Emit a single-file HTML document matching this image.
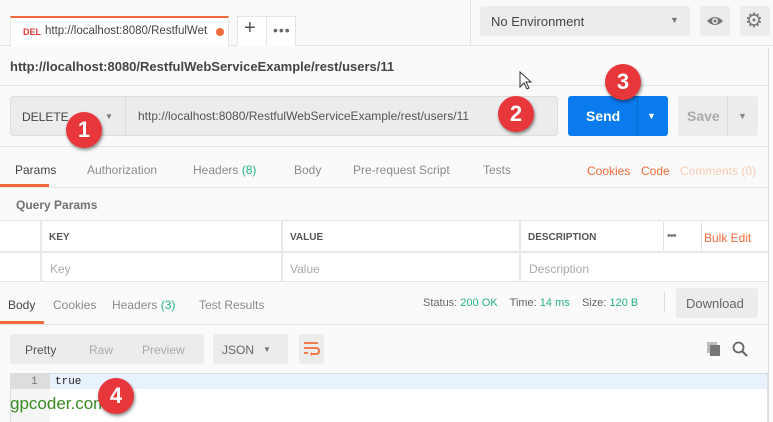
<!DOCTYPE html>
<html><head><meta charset="utf-8"><style>
*{box-sizing:border-box;margin:0;padding:0}
body{width:773px;height:422px;overflow:hidden;background:#fafafa;font-family:"Liberation Sans",sans-serif;font-size:12px;color:#505050;position:relative}
.a{position:absolute}
.btn{background:#ececec;border-radius:3px}
.c{border-radius:50%;width:36px;height:36px;background:#e8373a;color:#fff;font:bold 22px "Liberation Sans",sans-serif;text-align:center;line-height:36px;box-shadow:1px 2px 3px rgba(0,0,0,.45)}
.tab{color:#8a8a8a;font-size:12px}
.hd{font-size:10px;font-weight:bold;color:#555}
.ph{color:#aaa;font-size:12px}
</style></head><body>
<div class="a" style="left:0;top:0;width:773px;height:46px;background:#f9f9f9;border-bottom:1px solid #e2e2e2"></div>
<div class="a" style="left:10px;top:16px;width:219px;height:31px;background:#fff;border-top:2px solid #f26b3a;border-left:1px solid #e5e5e5;border-right:1px solid #e5e5e5"></div>
<div class="a" style="left:23px;top:27px;font-size:9px;font-weight:bold;color:#e53935">DEL</div>
<div class="a" style="left:45px;top:25px;font-size:11.5px;color:#444">http://localhost:8080/RestfulWet</div>
<div class="a" style="left:216px;top:28px;width:8px;height:8px;border-radius:50%;background:#f26b3a"></div>
<div class="a" style="left:237px;top:16px;width:59px;height:30px;background:#fff;border:1px solid #e5e5e5;border-bottom:none"></div>
<div class="a" style="left:266px;top:17px;width:1px;height:29px;background:#e5e5e5"></div>
<div class="a" style="left:244px;top:17px;font-size:20px;color:#555">+</div>
<div class="a" style="left:273px;top:22px;font-size:14px;color:#666;letter-spacing:1px">•••</div>
<div class="a" style="left:470px;top:0;width:1px;height:46px;background:#e2e2e2"></div>
<div class="a btn" style="left:480px;top:6px;width:210px;height:30px"></div>
<div class="a" style="left:491px;top:14px;font-size:13px;color:#444">No Environment</div>
<div class="a" style="left:670px;top:15px;font-size:9px;color:#777">▼</div>
<div class="a btn" style="left:700px;top:6px;width:30px;height:30px"></div>
<svg class="a" style="left:706px;top:13px" width="18" height="16" viewBox="0 0 18 16"><path d="M1 8 Q9 0 17 8 Q9 16 1 8Z" fill="#777"/><circle cx="9" cy="8" r="3" fill="#ececec"/><circle cx="9" cy="8" r="1.5" fill="#777"/></svg>
<div class="a btn" style="left:740px;top:6px;width:30px;height:30px"></div>
<div class="a" style="left:745px;top:8px;font-size:20px;color:#777">⚙</div>
<div class="a" style="left:768px;top:48px;width:1px;height:374px;background:#ddd"></div>
<div class="a" style="left:10px;top:59px;font-size:13px;font-weight:bold;color:#444">http://localhost:8080/RestfulWebServiceExample/rest/users/11</div>
<div class="a" style="left:0;top:85px;width:768px;height:1px;background:#e5e5e5"></div>
<div class="a" style="left:10px;top:96px;width:548px;height:40px;background:#ececec;border:1px solid #ddd;border-radius:3px"></div>
<div class="a" style="left:125px;top:97px;width:1px;height:38px;background:#ddd"></div>
<div class="a" style="left:22px;top:110px;font-size:12px;color:#444">DELETE</div>
<div class="a" style="left:105px;top:112px;font-size:8px;color:#777">▼</div>
<div class="a" style="left:138px;top:109px;font-size:12px;color:#555">http://localhost:8080/RestfulWebServiceExample/rest/users/11</div>
<div class="a" style="left:568px;top:96px;width:100px;height:40px;background:#097bed;border-radius:3px"></div>
<div class="a" style="left:637px;top:96px;width:1px;height:40px;background:#0a6ccf"></div>
<div class="a" style="left:586px;top:108px;font-size:14px;font-weight:bold;color:#fff">Send</div>
<div class="a" style="left:647px;top:111px;font-size:9px;color:#fff">▼</div>
<div class="a btn" style="left:678px;top:96px;width:80px;height:40px"></div>
<div class="a" style="left:727px;top:96px;width:1px;height:40px;background:#ddd"></div>
<div class="a" style="left:687px;top:108px;font-size:14px;font-weight:bold;color:#aaa">Save</div>
<div class="a" style="left:738px;top:111px;font-size:9px;color:#888">▼</div>
<div class="a" style="left:0;top:146px;width:768px;height:1px;background:#e5e5e5"></div>
<div class="a tab" style="left:15px;top:163px;color:#444">Params</div>
<div class="a tab" style="left:87px;top:163px">Authorization</div>
<div class="a tab" style="left:193px;top:163px">Headers <span style="color:#26b47f">(8)</span></div>
<div class="a tab" style="left:294px;top:163px">Body</div>
<div class="a tab" style="left:353px;top:163px">Pre-request Script</div>
<div class="a tab" style="left:483px;top:163px">Tests</div>
<div class="a tab" style="left:587px;top:164px;color:#f26b3a">Cookies</div>
<div class="a tab" style="left:641px;top:164px;color:#f26b3a">Code</div>
<div class="a tab" style="left:680px;top:164px;color:#f9cbb6">Comments (0)</div>
<div class="a" style="left:0;top:184px;width:49px;height:3px;background:#f26b3a"></div>
<div class="a" style="left:0;top:187px;width:768px;height:1px;background:#e5e5e5"></div>
<div class="a" style="left:16px;top:198px;font-size:12px;font-weight:bold;color:#707070">Query Params</div>
<div class="a" style="left:0;top:220px;width:768px;height:62px;background:#fff;border-top:1px solid #e5e5e5;border-bottom:1px solid #e5e5e5"></div>
<div class="a" style="left:0;top:251px;width:768px;height:2px;background:#e8e8e8"></div>
<div class="a" style="left:40px;top:220px;width:2px;height:62px;background:#e8e8e8"></div>
<div class="a" style="left:281px;top:220px;width:2px;height:62px;background:#e8e8e8"></div>
<div class="a" style="left:519px;top:220px;width:2px;height:62px;background:#e8e8e8"></div>
<div class="a" style="left:663px;top:222px;width:1px;height:28px;background:#e0e0e0"></div>
<div class="a" style="left:701px;top:222px;width:1px;height:28px;background:#e0e0e0"></div>
<div class="a hd" style="left:49px;top:232px">KEY</div>
<div class="a hd" style="left:290px;top:232px">VALUE</div>
<div class="a hd" style="left:528px;top:232px">DESCRIPTION</div>
<div class="a" style="left:667px;top:230px;font-size:11px;color:#777;letter-spacing:-1px">•••</div>
<div class="a" style="left:704px;top:231px;color:#f26b3a">Bulk Edit</div>
<div class="a ph" style="left:50px;top:262px">Key</div>
<div class="a ph" style="left:290px;top:262px">Value</div>
<div class="a ph" style="left:529px;top:262px">Description</div>
<div class="a tab" style="left:8px;top:298px;color:#444">Body</div>
<div class="a tab" style="left:53px;top:298px">Cookies</div>
<div class="a tab" style="left:112px;top:298px">Headers <span style="color:#26b47f">(3)</span></div>
<div class="a tab" style="left:199px;top:298px">Test Results</div>
<div class="a" style="left:0;top:321px;width:44px;height:3px;background:#f26b3a"></div>
<div class="a" style="left:0;top:324px;width:768px;height:1px;background:#e5e5e5"></div>
<div class="a" style="left:423px;top:297px;font-size:11px;color:#666">Status: <span style="color:#26b47f">200 OK</span>&nbsp;&nbsp;&nbsp; Time: <span style="color:#26b47f">14 ms</span>&nbsp;&nbsp;&nbsp; Size: <span style="color:#26b47f">120 B</span></div>
<div class="a" style="left:664px;top:292px;width:1px;height:20px;background:#ddd"></div>
<div class="a btn" style="left:676px;top:288px;width:82px;height:30px"></div>
<div class="a" style="left:686px;top:296px;font-size:13px;color:#666">Download</div>
<div class="a btn" style="left:10px;top:334px;width:194px;height:30px"></div>
<div class="a" style="left:25px;top:343px;color:#555">Pretty</div>
<div class="a" style="left:89px;top:343px;color:#aaa">Raw</div>
<div class="a" style="left:142px;top:343px;color:#aaa">Preview</div>
<div class="a btn" style="left:213px;top:334px;width:75px;height:30px"></div>
<div class="a" style="left:222px;top:343px;color:#666">JSON</div>
<div class="a" style="left:263px;top:345px;font-size:8px;color:#777">▼</div>
<div class="a btn" style="left:299px;top:334px;width:25px;height:30px"></div>
<svg class="a" style="left:303px;top:341px" width="17" height="16" viewBox="0 0 17 16"><path d="M1 2H15M1 7H13Q16 7 16 10Q16 13 13 13H9M1 12H5" stroke="#f26b3a" stroke-width="1.8" fill="none"/><path d="M9 11V15L7 13Z" fill="#f26b3a"/></svg>
<svg class="a" style="left:706px;top:341px" width="16" height="16"><rect x="1" y="1" width="10" height="11" fill="#bbb"/><rect x="4" y="4" width="10" height="11" fill="#777"/></svg>
<svg class="a" style="left:732px;top:341px" width="16" height="16"><circle cx="6.5" cy="6.5" r="5" stroke="#666" stroke-width="1.8" fill="none"/><path d="M10 10L15 15" stroke="#666" stroke-width="2"/></svg>
<div class="a" style="left:10px;top:373px;width:758px;height:49px;background:#fff;border:1px solid #ddd;border-bottom:none"></div>
<div class="a" style="left:11px;top:374px;width:39px;height:48px;background:#f5f5f5"></div>
<div class="a" style="left:11px;top:374px;width:39px;height:15px;background:#ddd"></div>
<div class="a" style="left:50px;top:374px;width:717px;height:15px;background:#e8f2fc"></div>
<div class="a" style="left:31px;top:376px;font:11px 'Liberation Mono',monospace;color:#777">1</div>
<div class="a" style="left:55px;top:376px;font:11px 'Liberation Mono',monospace;color:#222">true</div>
<div class="a" style="left:10px;top:394px;font-size:17px;color:#3a8a24">gpcoder.com</div>
<div class="a c" style="left:66px;top:112px">1</div>
<div class="a c" style="left:498px;top:96px">2</div>
<div class="a c" style="left:605px;top:64px">3</div>
<div class="a c" style="left:98px;top:378px">4</div>
<svg class="a" style="left:519px;top:71px" width="14" height="20"><path d="M1 1V16L5 12L8 18L10 17L7 11H12Z" fill="#fff" stroke="#333" stroke-width="1"/></svg>
</body></html>
